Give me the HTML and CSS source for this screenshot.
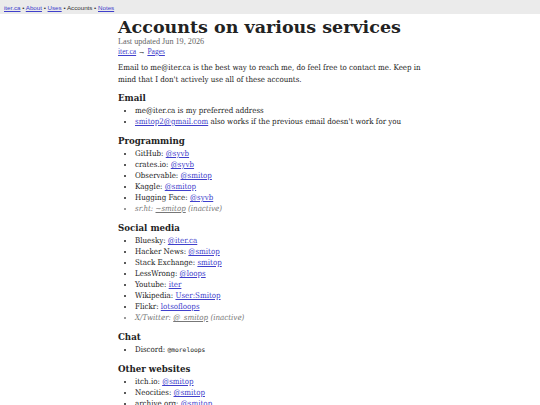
FILE: index.html
```html
<!DOCTYPE html>
<html lang="en">
<head>
    <meta charset="UTF-8">
    <title>Accounts on various services</title>
    <link rel="stylesheet" href="styles.css">
</head>
<body>
    <nav class="topnav">
        <a href="#">iter.ca</a> • <a href="#">About</a> • <a href="#">Uses</a> • <span>Accounts</span> • <a href="#">Notes</a>
    </nav>

    <main class="page">
        <h1>Accounts on various services</h1>
        <div class="meta">Last updated Jun 19, 2026</div>
        <div class="crumbs"><a href="#">iter.ca</a> → <a href="#">Pages</a></div>

        <p>Email to me@iter.ca is the best way to reach me, do feel free to contact me. Keep in mind that I don't actively use all of these accounts.</p>

        <h2>Email</h2>
        <ul>
            <li>me@iter.ca is my preferred address</li>
            <li><a href="#">smitop2@gmail.com</a> also works if the previous email doesn't work for you</li>
        </ul>

        <h2>Programming</h2>
        <ul>
            <li>GitHub: <a href="#">@syvb</a></li>
            <li>crates.io: <a href="#">@syvb</a></li>
            <li>Observable: <a href="#">@smitop</a></li>
            <li>Kaggle: <a href="#">@smitop</a></li>
            <li>Hugging Face: <a href="#">@syvb</a></li>
            <li class="inactive">sr.ht: <a href="#">~smitop</a> (inactive)</li>
        </ul>

        <h2>Social media</h2>
        <ul>
            <li>Bluesky: <a href="#">@iter.ca</a></li>
            <li>Hacker News: <a href="#">@smitop</a></li>
            <li>Stack Exchange: <a href="#">smitop</a></li>
            <li>LessWrong: <a href="#">@loops</a></li>
            <li>Youtube: <a href="#">iter</a></li>
            <li>Wikipedia: <a href="#">User:Smitop</a></li>
            <li>Flickr: <a href="#">lotsofloops</a></li>
            <li class="inactive">X/Twitter: <a href="#">@_smitop</a> (inactive)</li>
        </ul>

        <h2>Chat</h2>
        <ul>
            <li>Discord: <code>@moreloops</code></li>
        </ul>

        <h2>Other websites</h2>
        <ul>
            <li>itch.io: <a href="#">@smitop</a></li>
            <li>Neocities: <a href="#">@smitop</a></li>
            <li>archive.org: <a href="#">@smitop</a></li>
            <li>Letterboxd: <a href="#">@smitop</a></li>
        </ul>
    </main>
</body>
</html>
```

FILE: styles.css
```css
* {
    box-sizing: border-box;
}

body {
    margin: 0;
    font-family: "DejaVu Serif Condensed", "DejaVu Serif", serif;
    font-stretch: condensed;
    font-size: 7.9px;
    line-height: 11px;
    color: #222;
}

a {
    color: #4040cc;
}

.topnav {
    background: #ebebeb;
    height: 14px;
    padding: 2px 4px 0;
    font-family: "Liberation Sans", Arial, sans-serif;
    font-stretch: normal;
    font-size: 6.2px;
    line-height: 11px;
    color: #333;
}

.page {
    width: 304px;
    margin: 0 auto;
    padding-top: 3px;
}

h1 {
    margin: 0;
    font-family: "DejaVu Serif", serif;
    font-stretch: normal;
    font-size: 17.5px;
    line-height: 20px;
}

.meta {
    font-family: "Liberation Serif", serif;
    font-stretch: normal;
    font-size: 8.2px;
    line-height: 10px;
    color: #666;
}

.crumbs {
    font-family: "Liberation Serif", serif;
    font-stretch: normal;
    font-size: 7.5px;
    line-height: 10px;
}

p {
    margin: 5px -6px 4px 0;
    line-height: 12px;
}

h2 {
    margin: 0;
    font-size: 9.6px;
    line-height: 15px;
}

ul {
    margin: 0 0 6px;
    padding-left: 17px;
}

li {
    line-height: 11px;
}

.inactive,
.inactive a {
    color: #777;
    font-style: italic;
}

code {
    font-family: "DejaVu Sans Mono", monospace;
    font-stretch: normal;
    font-size: 6.3px;
}
```
